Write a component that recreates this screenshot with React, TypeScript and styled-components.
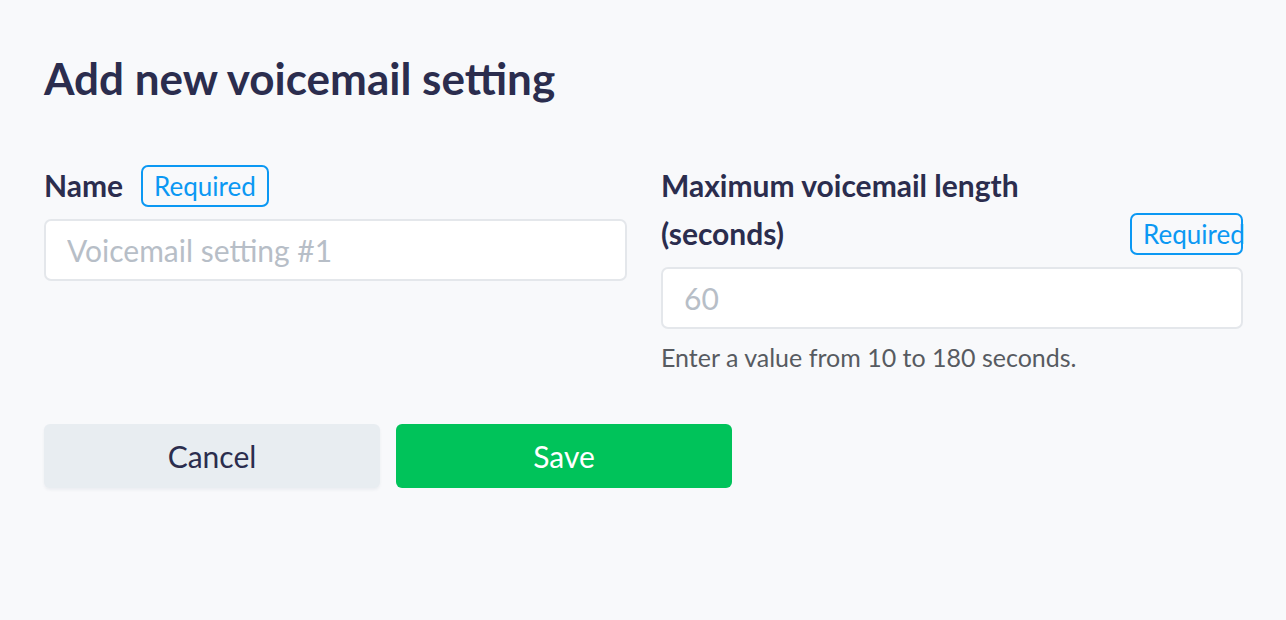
import styled, { createGlobalStyle } from 'styled-components';

const GlobalStyle = createGlobalStyle`
  * {
    box-sizing: border-box;
  }
  html, body {
    margin: 0;
    padding: 0;
    background: #f8f9fb;
  }
  body {
    font-family: Lato, 'Open Sans', sans-serif;
    color: #2b2d4e;
  }
`;

const Page = styled.div`
  min-height: 620px;
  padding: 52px 43px 0 44px;
  background: #f8f9fb;
`;

const Title = styled.h1`
  margin: 0 0 57px;
  font-size: 44px;
  font-weight: 700;
  line-height: 52px;
  color: #2b2d4e;
`;

const FieldGrid = styled.div`
  display: grid;
  grid-template-columns: 583px 582px;
  column-gap: 34px;
  align-items: start;
`;

const Field = styled.div`
  display: flex;
  flex-direction: column;
`;

const LabelRow = styled.div`
  display: flex;
  align-items: flex-end;
  gap: 18px;
  margin-bottom: 12px;
`;

const Label = styled.label`
  font-size: 30px;
  font-weight: 700;
  line-height: 48px;
  color: #2b2d4e;
  margin-bottom: -2px;
`;

const Badge = styled.span<{ $squeezed?: boolean }>`
  flex-shrink: 0;
  display: inline-flex;
  align-items: center;
  height: 42px;
  padding: ${(p) => (p.$squeezed ? '0 0 0 11px' : '0 11px')};
  width: ${(p) => (p.$squeezed ? '113px' : 'auto')};
  white-space: nowrap;
  border: 2px solid #0b98f3;
  border-radius: 7px;
  font-size: 26px;
  color: #0b98f3;
`;

const Input = styled.input`
  width: 100%;
  height: 62px;
  padding: 0 21px;
  border: 2px solid #e4e7eb;
  border-radius: 7px;
  background: #ffffff;
  font-family: inherit;
  font-size: 30px;
  color: #2b2d4e;
  outline: none;

  &::placeholder {
    color: #b7bec7;
  }
`;

const Help = styled.p`
  margin: 13px 0 0;
  font-size: 25px;
  line-height: 30px;
  color: #575b61;
`;

const Actions = styled.div`
  display: flex;
  gap: 16px;
  margin-top: 52px;
`;

const Button = styled.button<{ $primary?: boolean }>`
  width: 336px;
  height: 64px;
  border: none;
  border-radius: 6px;
  font-family: inherit;
  font-size: 30px;
  cursor: pointer;
  background: ${(p) => (p.$primary ? '#00c35a' : '#e8edf1')};
  color: ${(p) => (p.$primary ? '#ffffff' : '#2b2d4e')};
  box-shadow: ${(p) => (p.$primary ? 'none' : '0 2px 3px rgba(40, 50, 80, 0.06)')};
`;

const App = () => {
  return (
    <Page>
      <GlobalStyle />
      <Title>Add new voicemail setting</Title>
      <FieldGrid>
        <Field>
          <LabelRow>
            <Label htmlFor="name">Name</Label>
            <Badge>Required</Badge>
          </LabelRow>
          <Input id="name" placeholder="Voicemail setting #1" />
        </Field>
        <Field>
          <LabelRow>
            <Label htmlFor="length">Maximum voicemail length (seconds)</Label>
            <Badge $squeezed>Required</Badge>
          </LabelRow>
          <Input id="length" placeholder="60" />
          <Help>Enter a value from 10 to 180 seconds.</Help>
        </Field>
      </FieldGrid>
      <Actions>
        <Button>Cancel</Button>
        <Button $primary>Save</Button>
      </Actions>
    </Page>
  );
};

export default App;
